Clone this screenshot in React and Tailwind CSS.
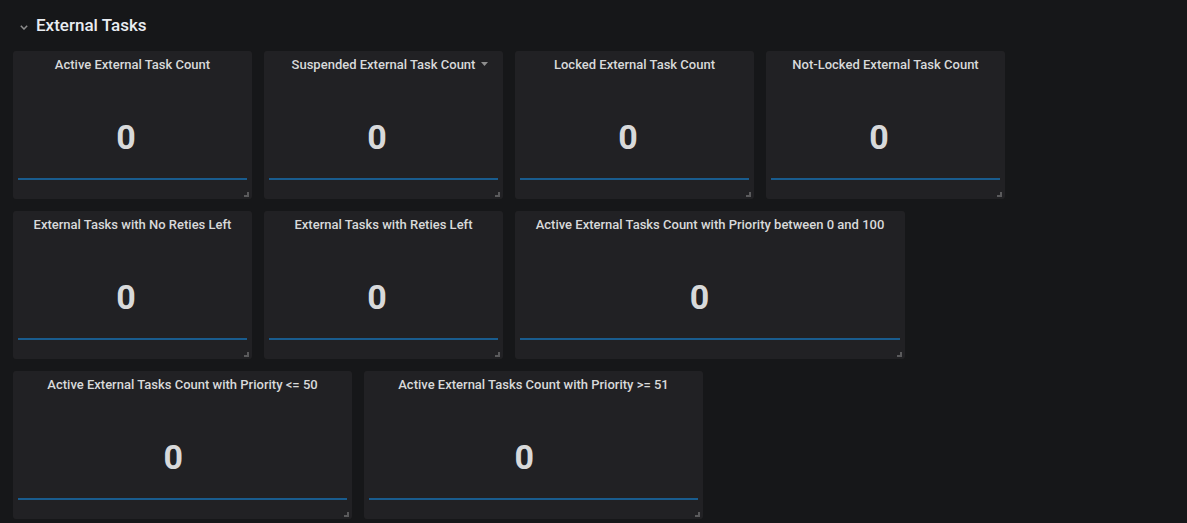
import React from 'react';

const rows = [
    [
        { title: 'Active External Task Count', w: 'w-[239px]' },
        { title: 'Suspended External Task Count', w: 'w-[239px]', menu: true },
        { title: 'Locked External Task Count', w: 'w-[239px]' },
        { title: 'Not-Locked External Task Count', w: 'w-[239px]' },
    ],
    [
        { title: 'External Tasks with No Reties Left', w: 'w-[239px]' },
        { title: 'External Tasks with Reties Left', w: 'w-[239px]' },
        { title: 'Active External Tasks Count with Priority between 0 and 100', w: 'w-[390px]' },
    ],
    [
        { title: 'Active External Tasks Count with Priority <= 50', w: 'w-[339px]' },
        { title: 'Active External Tasks Count with Priority >= 51', w: 'w-[339px]' },
    ],
];

const Panel = ({ title, w, menu }) => {
    return (
        <div className={`relative ${w} h-[148px] shrink-0 rounded-[3px] bg-[#212124] flex flex-col`}>
            <div className="h-[27px] flex items-center justify-center text-[13px] font-medium text-[#d8d9da] leading-none">
                <span className="relative">
                    {title}
                    {menu && (
                        <svg className="absolute left-full top-[4px] ml-[6px]" width="7" height="4" viewBox="0 0 7 4">
                            <path d="M0 0 L7 0 L3.5 4 Z" fill="#8e8e8e" />
                        </svg>
                    )}
                </span>
            </div>
            <div className="mt-[34px] h-[50px] flex items-center justify-center pr-[5.4%] text-[34px] font-bold leading-none text-[#d8d9da]">
                0
            </div>
            <div className="mx-[5px] mt-[16px] h-[2px] bg-[#195c8e]"></div>
            {/* resize handle */}
            <svg className="absolute right-[3px] bottom-[2px]" width="5" height="5" viewBox="0 0 5 5">
                <path d="M3 0 H5 V5 H0 V3 H3 Z" fill="#5a5a5c" />
            </svg>
        </div>
    );
};

const App = () => {
    return (
        <div className="min-h-screen w-full bg-[#161719] px-[13px] pb-4 font-['Roboto','Liberation_Sans',sans-serif]">
            <div className="h-[51px] flex items-center pt-[1px]">
                <svg className="ml-[7px] mr-[9px] mt-[3px]" width="8" height="5" viewBox="0 0 8 5">
                    <polyline points="0.8,0.8 4,4 7.2,0.8" fill="none" stroke="#8e8e8e" strokeWidth="1.5" />
                </svg>
                <h2 className="-ml-[1px] text-[17px] font-medium text-[#e9edf2]">External Tasks</h2>
            </div>
            <div className="flex flex-col gap-[12px]">
                {rows.map((row, i) => (
                    <div key={i} className="flex gap-[12px]">
                        {row.map((p) => (
                            <Panel key={p.title} {...p} />
                        ))}
                    </div>
                ))}
            </div>
        </div>
    );
};

export default App;
